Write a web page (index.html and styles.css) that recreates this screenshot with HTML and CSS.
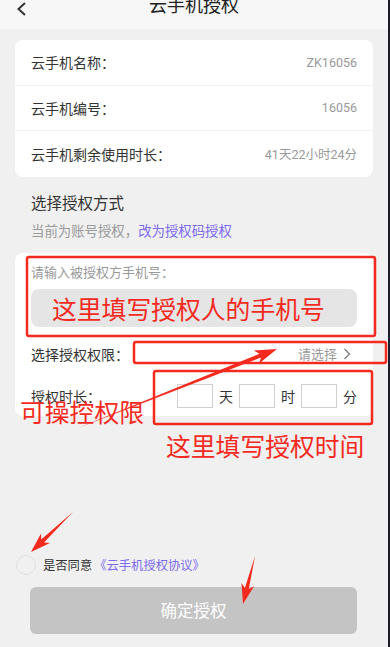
FILE: index.html
```html
<!DOCTYPE html>
<html lang="zh-CN">
<head>
<meta charset="utf-8">
<title>云手机授权</title>
<link rel="stylesheet" href="styles.css">
</head>
<body>
<div class="page">
  <header class="header">
    <svg class="back" width="14" height="14" viewBox="0 0 14 14"><path d="M10 1 L3.5 7 L10 13" fill="none" stroke="#333" stroke-width="2"/></svg>
    <div class="title">云手机授权</div>
  </header>

  <section class="card info">
    <div class="row"><span class="label">云手机名称：</span><span class="value">ZK16056</span></div>
    <div class="row"><span class="label">云手机编号：</span><span class="value">16056</span></div>
    <div class="row"><span class="label">云手机剩余使用时长：</span><span class="value">41天22小时24分</span></div>
  </section>

  <section class="method">
    <div class="method-title">选择授权方式</div>
    <div class="method-sub">当前为账号授权，<span class="link">改为授权码授权</span></div>
  </section>

  <section class="card form">
    <div class="hint">请输入被授权方手机号：</div>
    <div class="phone"><span class="note note-phone">这里填写授权人的手机号</span></div>
    <div class="perm-row">
      <span class="label">选择授权权限：</span>
      <span class="choose">请选择<svg width="8" height="12" viewBox="0 0 8 12"><path d="M1.5 1 L6.5 6 L1.5 11" fill="none" stroke="#777" stroke-width="1.2"/></svg></span>
    </div>
    <div class="time-row">
      <span class="label">授权时长：</span>
      <div class="time">
        <span class="box"></span><span class="unit">天</span>
        <span class="box"></span><span class="unit">时</span>
        <span class="box"></span><span class="unit">分</span>
      </div>
    </div>
  </section>

  <div class="agree">
    <span class="radio"></span>
    <span class="agree-text">是否同意</span><span class="link">《云手机授权协议》</span>
  </div>
  <div class="btn">确定授权</div>

  <div class="note note-perm">可操控权限</div>
  <div class="note note-time">这里填写授权时间</div>

  <svg class="marks" width="390" height="647" viewBox="0 0 390 647">
    <g fill="none" stroke="#f52a1e" stroke-width="2.5">
      <rect x="27" y="257" width="348" height="79" rx="2"/>
      <rect x="134" y="342" width="252" height="21" rx="2"/>
      <rect x="154" y="371" width="218" height="53" rx="2"/>
    </g>
    <g fill="#f52a1e">
      <polygon points="78,428 261,357.5 259.1,363.6 277,349 253.9,350.6 259.5,353.8"/>
      <polygon points="73,512 41.2,539.5 41,533.5 31,552 50,542.9 44,542.4"/>
      <polygon points="255,556 244.9,588 241.5,583 243,604 254.1,586.2 248.8,589"/>
    </g>
  </svg>
</div>
</body>
</html>
```

FILE: styles.css
```css
* { box-sizing: border-box; }
html, body { margin: 0; padding: 0; }
body {
  background: #1c1c2c;
  font-family: Roboto, "Noto Sans CJK SC", sans-serif;
  color: #333;
}
.page {
  position: relative;
  width: 388px;
  height: 647px;
  overflow: hidden;
  background: #f0f0f0;
}
.header {
  height: 29px;
  background: #f7f7f7;
  display: flex;
  justify-content: center;
  align-items: flex-start;
  position: relative;
}
.back {
  position: absolute;
  left: 15px;
  top: 2px;
}
.title {
  font-size: 18px;
  line-height: 20px;
  margin-top: -4px;
  color: #222;
}
.card {
  background: #fff;
  margin: 11px 15px 0;
  border-radius: 8px;
}
.info .row {
  height: 45.5px;
  display: flex;
  justify-content: space-between;
  align-items: center;
  padding: 0 16px;
  border-bottom: 1px solid #f0f0f0;
}
.info .row:last-child { border-bottom: none; }
.label {
  font-size: 14px;
  color: #333;
}
.value {
  font-size: 12.5px;
  color: #999;
}
.method {
  padding: 0 31px;
}
.method-title {
  font-size: 15.5px;
  line-height: 20px;
  margin-top: 17px;
  color: #333;
}
.method-sub {
  font-size: 13.4px;
  line-height: 18px;
  margin-top: 9px;
  color: #999;
}
.link { color: #7d6af0; }
.form {
  margin-top: 12px;
  padding: 12px 16px 7px;
}
.hint {
  font-size: 13px;
  line-height: 16px;
  color: #999;
}
.phone {
  margin-top: 8px;
  height: 38px;
  background: #e5e5e5;
  border-radius: 8px;
  display: flex;
  align-items: center;
  padding-left: 21px;
}
.perm-row {
  margin-top: 16px;
  height: 22px;
  display: flex;
  justify-content: space-between;
  align-items: center;
}
.choose {
  font-size: 13px;
  color: #999;
  display: flex;
  align-items: center;
  gap: 6px;
  margin-right: 6px;
}
.time-row {
  margin-top: 18px;
  height: 26px;
  display: flex;
  justify-content: space-between;
  align-items: center;
}
.time {
  display: flex;
  align-items: center;
  gap: 6px;
}
.box {
  width: 36px;
  height: 24px;
  border: 1px solid #cfcfcf;
}
.unit {
  font-size: 14px;
  color: #333;
  width: 14px;
}
.agree {
  margin-top: 139px;
  padding-left: 16px;
  height: 20px;
  display: flex;
  align-items: center;
  font-size: 12.3px;
}
.radio {
  width: 20px;
  height: 20px;
  border-radius: 50%;
  border: 1.5px solid #e0e0e0;
  margin-right: 7px;
}
.agree-text { color: #333; margin-right: 2px; }
.btn {
  margin: 12px 31px 0 30px;
  height: 47px;
  border-radius: 6px;
  background: #c4c4c4;
  color: #fff;
  font-size: 16.5px;
  display: flex;
  align-items: center;
  justify-content: center;
}
.note {
  font-family: "Noto Sans CJK SC", sans-serif;
  color: #f52a1e;
  font-size: 24.8px;
  line-height: 30px;
  letter-spacing: 0;
}
.note-perm {
  position: absolute;
  left: 20px;
  top: 396px;
}
.note-time {
  position: absolute;
  left: 166px;
  top: 430px;
}
.marks {
  position: absolute;
  left: 0;
  top: 0;
  pointer-events: none;
}
```
